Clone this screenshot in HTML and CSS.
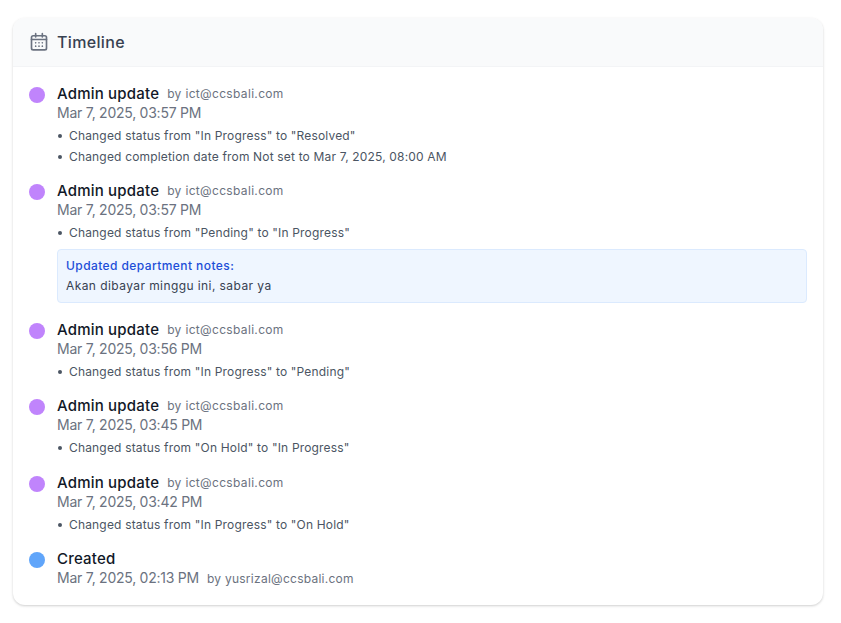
FILE: index.html
```
<!DOCTYPE html>
<html lang="en">
<head>
<meta charset="utf-8">
<title>Timeline</title>
<link rel="stylesheet" href="styles.css">
</head>
<body>
<section class="card">
  <header class="card-head">
    <svg class="head-icon" viewBox="0 0 24 24" width="20" height="20" fill="none" stroke="#6b7280" stroke-width="2" stroke-linecap="round" stroke-linejoin="round">
      <rect x="3" y="4.5" width="18" height="17" rx="2"/>
      <path d="M8 2v4M16 2v4M3 9h18"/>
      <path d="M8 13h.01M12 13h.01M16 13h.01M8 17h.01M12 17h.01M16 17h.01"/>
    </svg>
    <h2 class="card-title">Timeline</h2>
  </header>
  <div class="timeline">
    <article class="entry">
      <span class="dot dot-purple"></span>
      <div class="entry-body">
        <div class="line-title"><span class="who">Admin update</span><span class="by">by ict@ccsbali.com</span></div>
        <div class="date">Mar 7, 2025, 03:57 PM</div>
        <ul class="changes">
          <li>Changed status from "In Progress" to "Resolved"</li>
          <li>Changed completion date from Not set to Mar 7, 2025, 08:00 AM</li>
        </ul>
      </div>
    </article>
    <article class="entry">
      <span class="dot dot-purple"></span>
      <div class="entry-body">
        <div class="line-title"><span class="who">Admin update</span><span class="by">by ict@ccsbali.com</span></div>
        <div class="date">Mar 7, 2025, 03:57 PM</div>
        <ul class="changes">
          <li>Changed status from "Pending" to "In Progress"</li>
        </ul>
        <div class="note">
          <div class="note-title">Updated department notes:</div>
          <div class="note-text">Akan dibayar minggu ini, sabar ya</div>
        </div>
      </div>
    </article>
    <article class="entry">
      <span class="dot dot-purple"></span>
      <div class="entry-body">
        <div class="line-title"><span class="who">Admin update</span><span class="by">by ict@ccsbali.com</span></div>
        <div class="date">Mar 7, 2025, 03:56 PM</div>
        <ul class="changes">
          <li>Changed status from "In Progress" to "Pending"</li>
        </ul>
      </div>
    </article>
    <article class="entry">
      <span class="dot dot-purple"></span>
      <div class="entry-body">
        <div class="line-title"><span class="who">Admin update</span><span class="by">by ict@ccsbali.com</span></div>
        <div class="date">Mar 7, 2025, 03:45 PM</div>
        <ul class="changes">
          <li>Changed status from "On Hold" to "In Progress"</li>
        </ul>
      </div>
    </article>
    <article class="entry">
      <span class="dot dot-purple"></span>
      <div class="entry-body">
        <div class="line-title"><span class="who">Admin update</span><span class="by">by ict@ccsbali.com</span></div>
        <div class="date">Mar 7, 2025, 03:42 PM</div>
        <ul class="changes">
          <li>Changed status from "In Progress" to "On Hold"</li>
        </ul>
      </div>
    </article>
    <article class="entry">
      <span class="dot dot-blue"></span>
      <div class="entry-body">
        <div class="line-title"><span class="who">Created</span></div>
        <div class="date">Mar 7, 2025, 02:13 PM<span class="by by-date">by yusrizal@ccsbali.com</span></div>
      </div>
    </article>
  </div>
</section>
</body>
</html>
```
FILE: styles.css
```
* { box-sizing: border-box; }
html, body { background: #fff; }
body {
  margin: 0;
  padding: 18px 18px 19px 13px;
  font-family: "Inter", "Liberation Sans", sans-serif;
  color: #111827;
}
.card {
  background: #fff;
  border-radius: 12px;
  box-shadow: 0 1px 3px rgba(0,0,0,.14), 0 1px 2px rgba(0,0,0,.06);
  overflow: hidden;
}
.card-head {
  display: flex;
  align-items: center;
  gap: 8px;
  height: 49px;
  padding: 0 16px;
  background: #f9fafb;
  border-bottom: 1px solid #f3f4f6;
}
.head-icon { flex: none; }
.card-title {
  margin: 0;
  font-size: 16px;
  line-height: 24px;
  font-weight: 500;
  letter-spacing: .35px;
  color: #374151;
}
.timeline {
  display: flex;
  flex-direction: column;
  gap: 15.4px;
  padding: 16px;
}
.entry { display: flex; gap: 12px; }
.dot {
  flex: none;
  width: 16px;
  height: 16px;
  border-radius: 50%;
  margin-top: 4px;
}
.dot-purple { background: #c084fc; }
.dot-blue { background: #60a5fa; }
.entry-body { flex: 1; min-width: 0; }
.line-title {
  display: flex;
  align-items: center;
  gap: 8px;
  height: 20px;
  padding-top: 2px;
  line-height: 18px;
}
.who { font-size: 15px; font-weight: 500; letter-spacing: .2px; color: #111827; }
.by { font-size: 12px; letter-spacing: .33px; color: #6b7280; }
.by-date { margin-left: 8px; }
.date { font-size: 14px; line-height: 20px; letter-spacing: -.25px; color: #6b7280; }
.date .by { letter-spacing: .26px; }
.changes {
  list-style: none;
  margin: 0;
  padding: 0;
  font-size: 12px;
  line-height: 16px;
  letter-spacing: .17px;
  color: #4b5563;
}
.changes li { position: relative; padding-left: 12px; margin-top: 5px; }
.changes li::before {
  content: "";
  position: absolute;
  left: 1px;
  top: 6px;
  width: 4px;
  height: 4px;
  border-radius: 50%;
  background: #4b5563;
}
.note {
  margin-top: 8px;
  padding: 8px;
  background: #eff6ff;
  border: 1px solid #dbeafe;
  border-radius: 4px;
  font-size: 12px;
  line-height: 16px;
  letter-spacing: .42px;
}
.note-title { font-weight: 500; color: #1d4ed8; }
.note-text { margin-top: 4px; color: #374151; }
```
